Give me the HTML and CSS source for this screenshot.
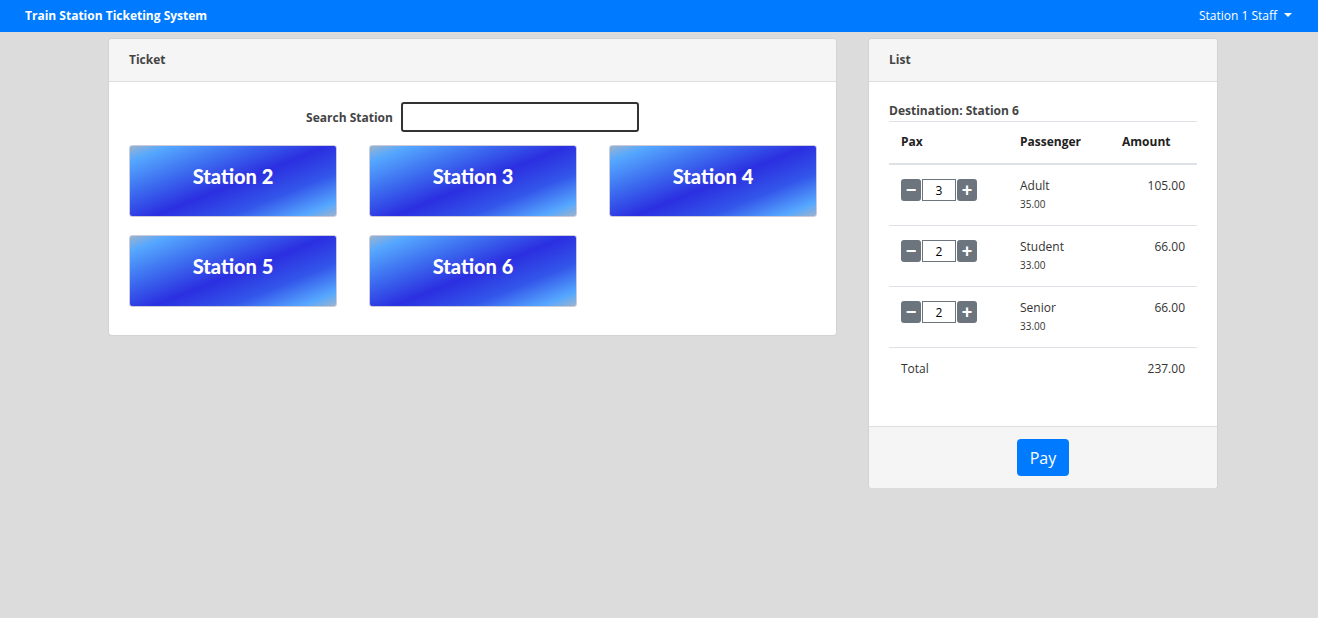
FILE: index.html
```html
<!DOCTYPE html>
<html lang="en">
<head>
  <meta charset="UTF-8">
  <meta name="viewport" content="width=device-width, initial-scale=1.0">
  <title>Train Station Ticketing System</title>
  <link rel="stylesheet" href="styles.css">
</head>
<body>

  <!-- Top Bar -->
  <nav class="navbar">
    <span class="brand">Train Station Ticketing System</span>
    <span class="user-menu">Station 1 Staff <span class="caret"></span></span>
  </nav>

  <div class="container">

    <!-- Ticket Card -->
    <div class="card">
      <div class="card-header">Ticket</div>
      <div class="card-body">
        <div class="search-row">
          <label for="search">Search Station</label>
          <input type="text" id="search">
        </div>
        <div class="station-grid">
          <button class="station-btn">Station 2</button>
          <button class="station-btn">Station 3</button>
          <button class="station-btn">Station 4</button>
          <button class="station-btn">Station 5</button>
          <button class="station-btn">Station 6</button>
        </div>
      </div>
    </div>

    <!-- List Card -->
    <div class="card">
      <div class="card-header">List</div>
      <div class="card-body list-body">
        <div class="destination">Destination: Station 6</div>
        <table class="fare-table">
          <thead>
            <tr>
              <th>Pax</th>
              <th>Passenger</th>
              <th>Amount</th>
            </tr>
          </thead>
          <tbody>
            <tr>
              <td>
                <div class="qty">
                  <button class="qty-btn">&minus;</button>
                  <input type="text" value="3">
                  <button class="qty-btn">+</button>
                </div>
              </td>
              <td>Adult<div class="price">35.00</div></td>
              <td class="amount">105.00</td>
            </tr>
            <tr>
              <td>
                <div class="qty">
                  <button class="qty-btn">&minus;</button>
                  <input type="text" value="2">
                  <button class="qty-btn">+</button>
                </div>
              </td>
              <td>Student<div class="price">33.00</div></td>
              <td class="amount">66.00</td>
            </tr>
            <tr>
              <td>
                <div class="qty">
                  <button class="qty-btn">&minus;</button>
                  <input type="text" value="2">
                  <button class="qty-btn">+</button>
                </div>
              </td>
              <td>Senior<div class="price">33.00</div></td>
              <td class="amount">66.00</td>
            </tr>
            <tr>
              <td>Total</td>
              <td></td>
              <td class="amount">237.00</td>
            </tr>
          </tbody>
        </table>
      </div>
      <div class="card-footer">
        <button class="pay-btn">Pay</button>
      </div>
    </div>

  </div>

</body>
</html>
```

FILE: styles.css
```css
/* Global Styles */
body {
  font-family: 'Open Sans', sans-serif;
  font-size: 12px;
  background-color: #dcdcdc;
  color: #333;
  margin: 0;
  padding: 0;
}

/* Navbar */
.navbar {
  height: 32px;
  background-color: #007bff;
  color: white;
  display: flex;
  align-items: center;
  justify-content: space-between;
  padding: 0 26px 2px 25px;
  box-sizing: border-box;
}

.brand {
  font-weight: bold;
  font-size: 12px;
}

.user-menu {
  font-size: 12px;
  display: flex;
  align-items: center;
}

.caret {
  display: inline-block;
  margin-left: 7px;
  border-top: 4px solid white;
  border-left: 4px solid transparent;
  border-right: 4px solid transparent;
}

.container {
  display: grid;
  grid-template-columns: 727px 348px;
  gap: 33px;
  align-items: start;
  width: 1108px;
  margin: 7px 0 0 109px;
}

/* Cards */
.card {
  background-color: #fff;
  border-radius: 3px;
  box-shadow: 0 0 0 1px rgba(0, 0, 0, 0.04);
  overflow: hidden;
}

.card-header {
  background-color: #f5f5f5;
  border-bottom: 1px solid #ddd;
  padding: 12px 20px;
  height: 18px;
  line-height: 18px;
  font-weight: bold;
  font-size: 12px;
  color: #444;
}

.card-body {
  padding: 20px 20px 28px;
}

/* Search */
.search-row {
  display: flex;
  justify-content: center;
  align-items: center;
  gap: 8px;
  margin-bottom: 13px;
}

.search-row label {
  font-weight: bold;
  color: #444;
}

.search-row input {
  width: 234px;
  height: 26px;
  border: 2px solid #333;
  border-radius: 3px;
  padding: 0;
}

/* Station Buttons */
.station-grid {
  display: grid;
  grid-template-columns: repeat(3, 208px);
  column-gap: 32px;
  row-gap: 18px;
}

.station-btn {
  height: 72px;
  border: 1px solid #ccd;
  border-radius: 3px;
  background: linear-gradient(158deg, #9bb3cc 0%, #56a8ff 10%, #3d6ff0 30%, #2b2fe0 52%, #3356ea 72%, #56a8ff 91%, #9bb3cc 100%);
  color: white;
  font-family: 'Lato', sans-serif;
  font-weight: 900;
  font-size: 20px;
  padding-bottom: 12px;
  cursor: pointer;
}

/* List */
.list-body {
  padding: 20px 20px 21px;
}

.destination {
  font-weight: bold;
  color: #444;
  line-height: 17px;
  padding-bottom: 2px;
  border-bottom: 1px solid #dee2e6;
}

.fare-table {
  width: 100%;
  border-collapse: collapse;
  margin-bottom: 16px;
}

.fare-table th,
.fare-table td {
  padding: 12px;
  text-align: left;
  vertical-align: top;
  line-height: 17px;
}

.fare-table th {
  border-bottom: 2px solid #dee2e6;
  color: #222;
  padding-top: 11px;
  padding-bottom: 13px;
}

.fare-table th:first-child {
  width: 95px;
}

.fare-table th:nth-child(2) {
  width: 78px;
}

.fare-table tbody tr + tr td {
  border-top: 1px solid #dee2e6;
}

.fare-table td {
  color: #333;
}

.fare-table .amount {
  text-align: right;
}

.price {
  font-size: 10px;
  margin-top: 2px;
}

/* Quantity */
.qty {
  display: flex;
  margin-top: 2px;
}

.qty-btn {
  width: 20px;
  height: 22px;
  border: none;
  border-radius: 3px;
  background-color: #6c757d;
  color: white;
  font-size: 18px;
  font-weight: bold;
  line-height: 20px;
  padding: 0;
}

.qty input {
  width: 32px;
  height: 20px;
  border: 1px solid #6c757d;
  padding: 0;
  text-align: center;
  font-family: 'Open Sans', sans-serif;
  font-size: 12px;
  margin: 0 1px;
}

/* Footer */
.card-footer {
  background-color: #f5f5f5;
  border-top: 1px solid #ddd;
  padding: 12px;
  text-align: center;
}

.pay-btn {
  background-color: #007bff;
  color: white;
  border: none;
  border-radius: 4px;
  width: 52px;
  height: 37px;
  font-family: 'Open Sans', sans-serif;
  font-size: 16px;
  cursor: pointer;
}
```
